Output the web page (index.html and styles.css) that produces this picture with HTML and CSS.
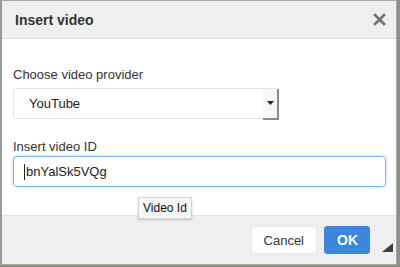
FILE: index.html
```html
<!DOCTYPE html>
<html lang="en">

<head>
  <meta charset="UTF-8">
  <title>Insert video</title>
  <link rel="stylesheet" href="styles.css">
</head>

<body>
  <div class="dialog">
    <div class="dialog-header">
      <h1>Insert video</h1>
      <svg class="close" width="13" height="13" viewBox="0 0 13 13">
        <path d="M2 2 L11 11 M11 2 L2 11" stroke="#707070" stroke-width="2.6" stroke-linecap="square" />
      </svg>
    </div>

    <div class="dialog-body">
      <div class="field">
        <label>Choose video provider</label>
        <div class="select">
          <span class="select-value">YouTube</span>
          <span class="select-arrow">
            <svg width="7" height="4" viewBox="0 0 7 4"><path d="M0 0 H7 L3.5 4 Z" fill="#222" /></svg>
          </span>
        </div>
      </div>
      <div class="field field-id">
        <label>Insert video ID</label>
        <div class="text-input">
          <span class="caret"></span>
          <span class="input-value">bnYalSk5VQg</span>
        </div>
      </div>
      <div class="tooltip">Video Id</div>
    </div>

    <div class="dialog-footer">
      <button class="btn">Cancel</button>
      <button class="btn btn-primary">OK</button>
      <svg class="resize" width="11" height="9" viewBox="0 0 11 9"><path d="M11 0 V9 H0 Z" fill="#3f3f3f" /></svg>
    </div>
  </div>
</body>

</html>
```

FILE: styles.css
```css
* {
  box-sizing: border-box;
  margin: 0;
  padding: 0;
  font-family: "Liberation Sans", Arial, sans-serif;
}

body {
  background-color: #8f8f82;
  width: 400px;
  height: 267px;
  overflow: hidden;
}

.dialog {
  width: 397px;
  height: 265px;
  background-color: #ffffff;
  border: 1px solid #a8a8a8;
  border-left: 2px solid #9a9a9a;
  display: flex;
  flex-direction: column;
  position: relative;
}

.dialog-header {
  height: 38px;
  background-color: #efefef;
  border-bottom: 1px solid #dcdcdc;
  display: flex;
  align-items: center;
  justify-content: space-between;
  padding: 0 10px 0 13px;
  flex-shrink: 0;
}

h1 {
  font-size: 14px;
  font-weight: bold;
  color: #333333;
}

.dialog-body {
  flex: 1;
  padding: 28px 10px 0 11px;
  position: relative;
}

.field {
  margin-bottom: 20px;
}

label {
  display: block;
  font-size: 13px;
  color: #333333;
  margin-bottom: 6px;
}

.field-id label {
  margin-bottom: 2px;
}

.select {
  width: 266px;
  height: 31px;
  border: 1px solid #e4e4e4;
  border-radius: 3px;
  display: flex;
  align-items: center;
  justify-content: space-between;
  padding-left: 15px;
  font-size: 13px;
  color: #222222;
}

.select-arrow {
  width: 16px;
  height: 31px;
  margin-right: -1px;
  margin-top: 1px;
  border-right: 2px solid #8a8a8a;
  border-bottom: 2px solid #8a8a8a;
  background-color: #f7f7f7;
  display: flex;
  align-items: center;
  justify-content: center;
}

.text-input {
  width: 373px;
  height: 31px;
  border: 1px solid #84b4e6;
  border-radius: 4px;
  box-shadow: 0 0 3px rgba(100, 160, 230, 0.5);
  display: flex;
  align-items: center;
  padding-left: 10px;
  font-size: 13px;
  color: #222222;
}

.caret {
  width: 1px;
  height: 16px;
  background-color: #222222;
  flex-shrink: 0;
}

.input-value {
  margin-left: 1px;
}

.tooltip {
  position: absolute;
  left: 136px;
  top: 158px;
  padding: 3px 4px;
  height: 22px;
  font-size: 12px;
  color: #111111;
  background-color: #f6f6f6;
  border: 1px solid #d4d4d4;
  box-shadow: 0 1px 2px rgba(0, 0, 0, 0.2);
  z-index: 2;
}

.dialog-footer {
  height: 49px;
  background-color: #efefef;
  border-top: 1px solid #e2e2e2;
  display: flex;
  align-items: flex-start;
  justify-content: flex-end;
  gap: 7px;
  padding: 10px 26px 0 0;
  position: relative;
  flex-shrink: 0;
}

.btn {
  height: 28px;
  padding: 0 12px;
  border: 1px solid #e6e6e6;
  border-radius: 3px;
  background-color: #ffffff;
  font-size: 13px;
  color: #333333;
  cursor: pointer;
}

.btn-primary {
  width: 46px;
  background-color: #3a87dc;
  border-color: #3a87dc;
  color: #ffffff;
  font-weight: bold;
  font-size: 14px;
}

.resize {
  position: absolute;
  right: 3px;
  bottom: 12px;
}
```
